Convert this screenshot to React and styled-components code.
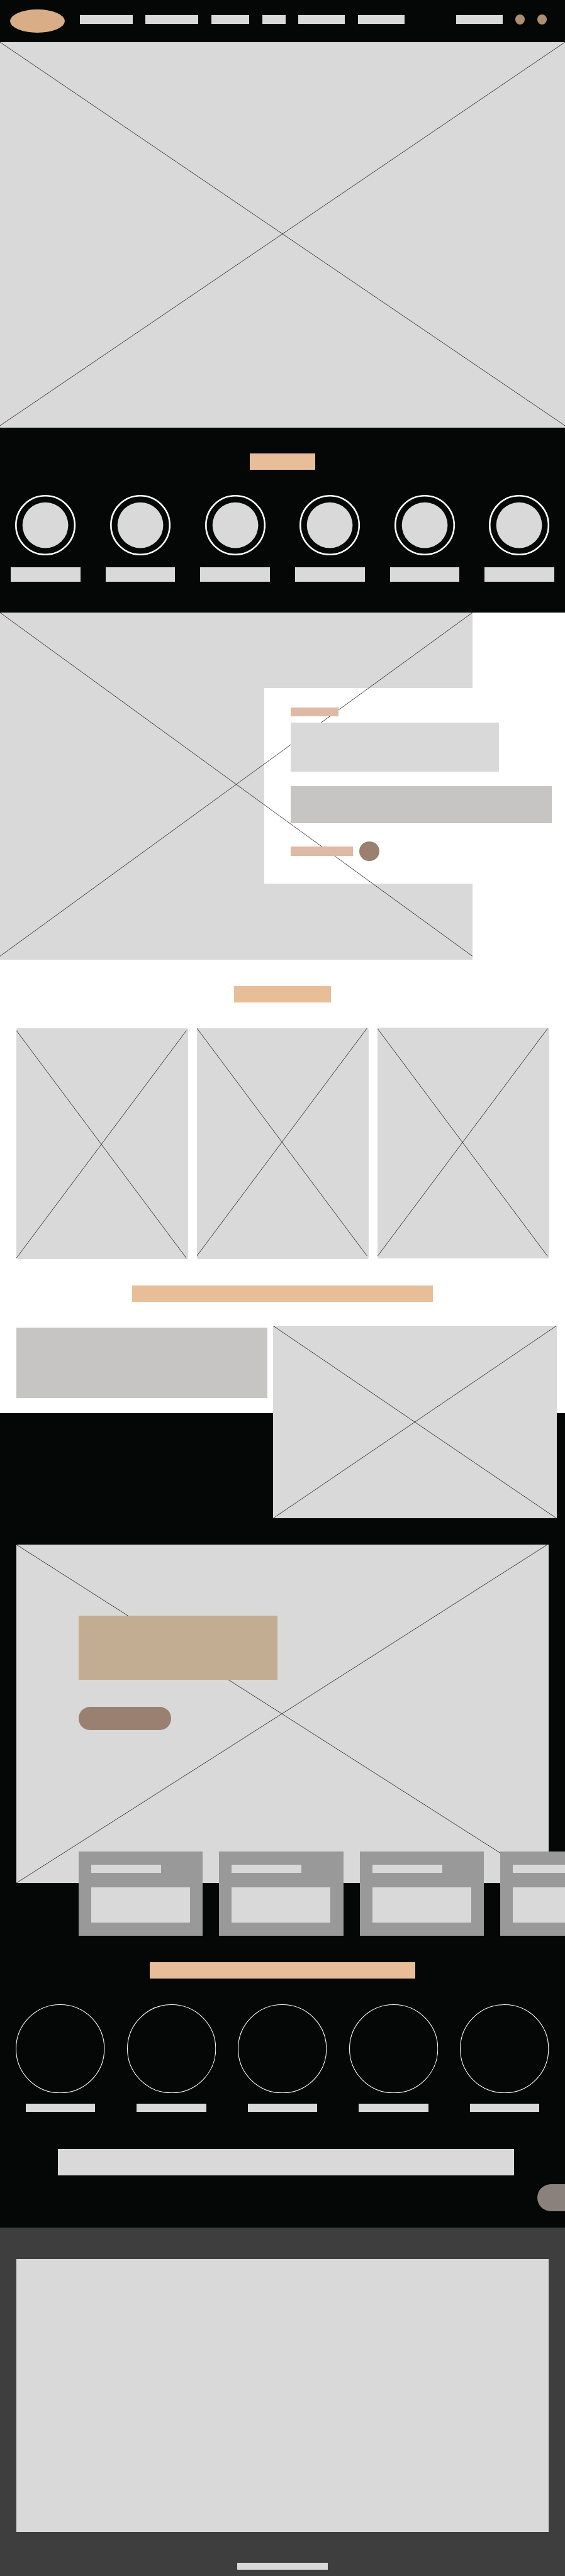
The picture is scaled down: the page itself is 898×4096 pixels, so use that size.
import React from 'react';
import styled, { createGlobalStyle } from 'styled-components';

// Design units (1728 x 7878 artboard) to screen pixels.
const x = (v) => `${(v * 898) / 1728}px`;
const y = (v) => `${(v * 4096) / 7878}px`;

const c = {
  ink: '#050706',
  white: '#ffffff',
  block: '#d9d9d9',
  stone: '#c7c5c3',
  card: '#999999',
  sand: '#e8be98',
  logo: '#d9ad86',
  dot: '#ad8e70',
  blush: '#ddb9a6',
  brown: '#9a8071',
  tan: '#c2ad93',
  chat: '#8a817c',
  footer: '#3e3e3e',
};

const GlobalStyle = createGlobalStyle`
  * { box-sizing: border-box; }
  body { margin: 0; background: ${c.white}; font-family: "Liberation Sans", Arial, sans-serif; }
`;

const Page = styled.div`
  width: 898px;
  height: 4096px;
  overflow: hidden;
  display: flex;
  flex-direction: column;
`;

const Bar = styled.div`
  flex: none;
  width: ${(p) => x(p.$w)};
  height: ${(p) => y(p.$h)};
  background: ${(p) => p.$tone || c.block};
`;

const Title = styled(Bar)`
  margin: 0 auto;
`;

const Lines = styled.svg`
  position: absolute;
  top: 0;
  left: 0;
  z-index: 1;
  width: ${(p) => x(p.$w)};
  height: ${(p) => y(p.$h)};
  pointer-events: none;
`;

function Cross({ w, h, left = 0, right = w, top = 0, bottom = h }) {
  return (
    <Lines $w={w} $h={h} viewBox={`0 0 ${w} ${h}`} preserveAspectRatio="none" stroke="#000" strokeWidth="1.4">
      <line x1={left} y1={top} x2={right} y2={bottom} />
      <line x1={right} y1={top} x2={left} y2={bottom} />
    </Lines>
  );
}

const Photo = styled.div`
  position: relative;
  flex: none;
  width: ${(p) => x(p.$w)};
  height: ${(p) => y(p.$h)};
  border-radius: ${(p) => x(p.$r || 0)};
  background: ${c.block};
`;

/* Header */
const Header = styled.header`
  flex: none;
  display: flex;
  align-items: flex-start;
  height: ${y(129)};
  padding: 0 ${x(55)} 0 ${x(30)};
  background: ${c.ink};
`;

const Logo = styled.div`
  width: ${x(168)};
  height: ${y(72)};
  margin-top: ${y(29)};
  border-radius: 50%;
  background: ${c.logo};
`;

const Nav = styled.nav`
  display: flex;
  gap: ${x(39.4)};
  margin: ${y(47)} 0 0 ${x(47)};
`;

const Actions = styled.div`
  display: flex;
  align-items: center;
  gap: ${x(37.5)};
  height: ${y(30)};
  margin: ${y(45)} 0 0 auto;
`;

const Dot = styled.div`
  width: ${x(30)};
  height: ${x(30)};
  border-radius: 50%;
  background: ${c.dot};
`;

/* Categories */
const Categories = styled.section`
  flex: none;
  height: ${y(566)};
  padding: ${y(80)} ${x(33)} 0;
  background: ${c.ink};
`;

const CategoryRow = styled.div`
  display: flex;
  justify-content: space-between;
  margin-top: ${y(77)};
`;

const Category = styled.div`
  display: flex;
  flex-direction: column;
  align-items: center;
  gap: ${y(35.5)};
`;

const Ring = styled.svg`
  display: block;
  width: ${x(185)};
  height: ${y(185)};
`;

/* Story */
const Story = styled.section`
  flex: none;
  position: relative;
  display: grid;
  height: ${y(1062)};
`;

const StoryPhoto = styled.div`
  grid-area: 1 / 1;
  width: ${x(1445)};
  background: ${c.block};
`;

const StoryPanel = styled.div`
  grid-area: 1 / 1;
  height: ${y(598)};
  margin: ${y(232)} 0 0 ${x(809)};
  padding: ${y(58)} 0 0 ${x(79.5)};
  background: ${c.white};
`;

const StoryBody = styled.div`
  position: relative;
  z-index: 2;
  display: flex;
  flex-direction: column;
`;

const StoryText = styled(Bar)`
  margin-top: ${(p) => y(p.$gap)};
`;

const StoryLink = styled.div`
  display: flex;
  align-items: center;
  gap: ${x(20)};
  margin-top: ${y(55)};
`;

const RoundButton = styled.div`
  width: ${x(60)};
  height: ${x(60)};
  border-radius: 50%;
  background: ${c.brown};
`;

/* Gallery */
const Gallery = styled.section`
  flex: none;
  height: ${y(996)};
  padding: ${y(80)} ${x(49)} 0 ${x(50)};
`;

const GalleryRow = styled.div`
  display: flex;
  align-items: flex-start;
  justify-content: space-between;
  margin-top: ${y(77)};
`;

const GalleryPhoto = styled(Photo)`
  margin-top: ${(p) => y(p.$drop)};
`;

/* Feature: its photo hangs over the dark section below. */
const Feature = styled.section`
  flex: none;
  height: ${y(390)};
`;

const FeatureRow = styled.div`
  display: flex;
  align-items: flex-start;
  gap: ${x(18.5)};
  margin: ${y(74)} 0 0 ${x(50)};
`;

const FeatureText = styled(Bar)`
  margin-top: ${y(6)};
`;

/* Promo */
const Promo = styled.section`
  flex: none;
  height: ${y(2491)};
  padding-top: ${y(403)};
  background: ${c.ink};
`;

const PromoBanner = styled(Photo)`
  margin-left: ${x(50)};
  padding: ${y(218)} 0 0 ${x(190)};
`;

const PromoCopy = styled.div`
  position: relative;
  z-index: 2;
  display: flex;
  flex-direction: column;
  gap: ${y(84)};
`;

const PillButton = styled.div`
  width: ${x(283)};
  height: ${y(70)};
  border-radius: ${x(35)};
  background: ${c.brown};
`;

const CardRail = styled.div`
  position: relative;
  z-index: 2;
  display: flex;
  gap: ${x(50)};
  margin-top: ${y(-97)};
  padding-left: ${x(240)};
  overflow: hidden;
`;

const Card = styled.article`
  flex: none;
  display: flex;
  flex-direction: column;
  gap: ${y(45)};
  width: ${x(380)};
  height: ${y(258)};
  padding: ${y(40)} ${x(39)} 0;
  background: ${c.card};
`;

const BrandArea = styled.div`
  margin-top: ${y(80)};
`;

const BrandRow = styled.div`
  display: flex;
  justify-content: space-between;
  padding: 0 ${x(48.5)};
  margin-top: ${y(79)};
`;

const Brand = styled.div`
  display: flex;
  flex-direction: column;
  align-items: center;
  gap: ${y(32)};
`;

const BrandRing = styled.svg`
  display: block;
  width: ${x(272)};
  height: ${y(272)};
`;

const Notice = styled(Bar)`
  margin: ${y(114)} 0 0 ${x(176.5)};
`;

const ChatTab = styled.div`
  width: ${x(84)};
  height: ${y(83)};
  margin: ${y(27)} 0 0 auto;
  border-radius: ${x(42)} 0 0 ${x(42)};
  background: ${c.chat};
`;

/* Footer */
const Footer = styled.footer`
  flex: 1;
  display: flex;
  flex-direction: column;
  align-items: center;
  gap: ${y(95)};
  padding-top: ${y(97)};
  background: ${c.footer};
`;

const navWidths = [161, 161, 117, 71, 143, 143];
const galleryPhotos = [
  { drop: 3.5, top: 7, bottom: 703 },
  { drop: 3.5, top: 0, bottom: 696 },
  { drop: 0, top: 3, bottom: 699 },
];

export default function App() {
  return (
    <Page>
      <GlobalStyle />
      <Header>
        <Logo />
        <Nav>
          {navWidths.map((w, i) => (
            <Bar key={i} $w={w} $h={26} />
          ))}
        </Nav>
        <Actions>
          <Bar $w={143} $h={26} />
          <Dot />
          <Dot />
        </Actions>
      </Header>

      <Photo $w={1728} $h={1178}>
        <Cross w={1728} h={1178} bottom={1173} />
      </Photo>

      <Categories>
        <Title $w={202} $h={50} $tone={c.sand} />
        <CategoryRow>
          {Array.from({ length: 6 }, (_, i) => (
            <Category key={i}>
              <Ring viewBox="0 0 185 185">
                <circle cx="92.5" cy="92.5" r="90" fill="none" stroke={c.white} strokeWidth="5" />
                <circle cx="92.5" cy="92.5" r="70" fill={c.block} />
              </Ring>
              <Bar $w={213} $h={44} />
            </Category>
          ))}
        </CategoryRow>
      </Categories>

      <Story>
        <StoryPhoto />
        <StoryPanel>
          <StoryBody>
            <Bar $w={146} $h={28} $tone={c.blush} />
            <StoryText $w={638} $h={150} $gap={20} />
            <StoryText $w={800} $h={114} $gap={43} $tone={c.stone} />
            <StoryLink>
              <Bar $w={191} $h={28} $tone={c.blush} />
              <RoundButton />
            </StoryLink>
          </StoryBody>
        </StoryPanel>
        <Cross w={1445} h={1062} bottom={1051} />
      </Story>

      <Gallery>
        <Title $w={297} $h={50} $tone={c.sand} />
        <GalleryRow>
          {galleryPhotos.map((g, i) => (
            <GalleryPhoto key={i} $w={525} $h={706} $r={6} $drop={g.drop}>
              <Cross w={525} h={706} right={520} top={g.top} bottom={g.bottom} />
            </GalleryPhoto>
          ))}
        </GalleryRow>
      </Gallery>

      <Feature>
        <Title $w={919} $h={50} $tone={c.sand} />
        <FeatureRow>
          <FeatureText $w={767} $h={215} $tone={c.stone} />
          <Photo $w={867} $h={589}>
            <Cross w={867} h={589} />
          </Photo>
        </FeatureRow>
      </Feature>

      <Promo>
        <PromoBanner $w={1628.5} $h={1035}>
          <Cross w={1628.5} h={1035} right={1624} />
          <PromoCopy>
            <Bar $w={608} $h={195} $tone={c.tan} />
            <PillButton />
          </PromoCopy>
        </PromoBanner>
        <CardRail>
          {Array.from({ length: 4 }, (_, i) => (
            <Card key={i}>
              <Bar $w={213} $h={25} />
              <Bar $w={302} $h={108} />
            </Card>
          ))}
        </CardRail>
        <BrandArea>
          <Title $w={811} $h={50} $tone={c.sand} />
          <BrandRow>
            {Array.from({ length: 5 }, (_, i) => (
              <Brand key={i}>
                <BrandRing viewBox="0 0 272 272">
                  <circle cx="136" cy="136" r="135" fill="none" stroke={c.white} strokeWidth="2" />
                </BrandRing>
                <Bar $w={213} $h={25} />
              </Brand>
            ))}
          </BrandRow>
        </BrandArea>
        <Notice $w={1395} $h={81} />
        <ChatTab />
      </Promo>

      <Footer>
        <Bar $w={1628.5} $h={834} />
        <Bar $w={279} $h={20} />
      </Footer>
    </Page>
  );
}
